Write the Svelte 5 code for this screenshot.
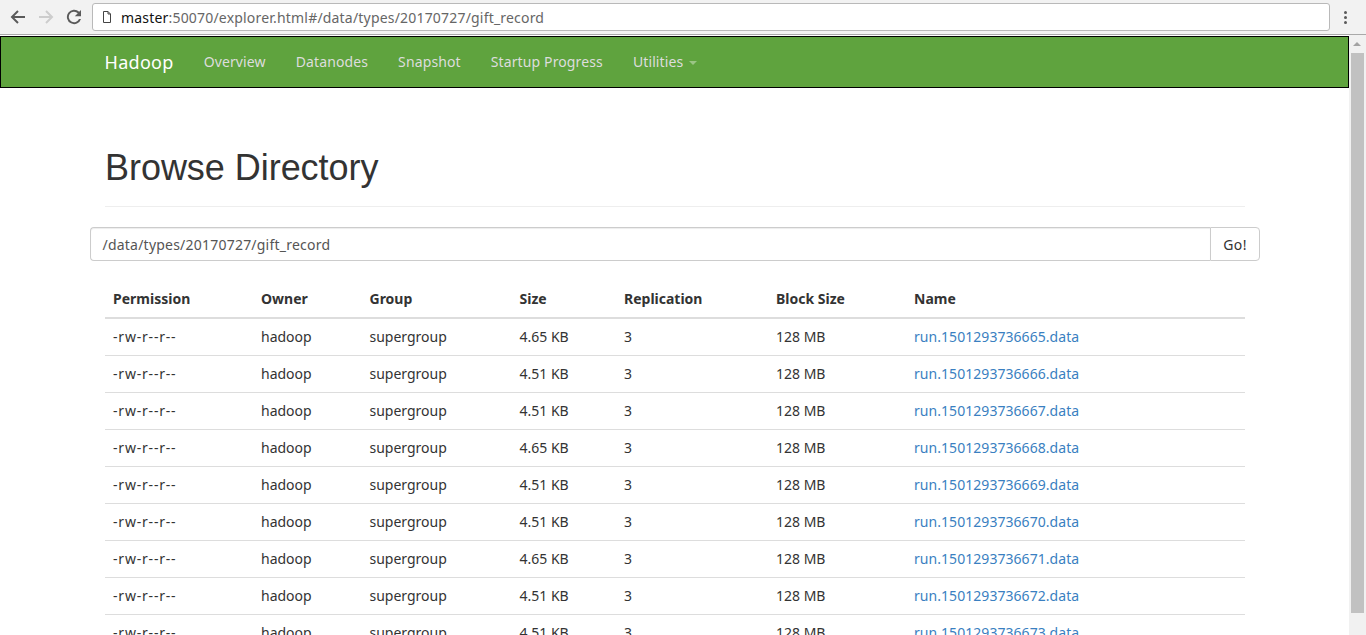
<script>
  const columns = ['Permission', 'Owner', 'Group', 'Size', 'Replication', 'Block Size', 'Name'];
  const sizes = ['4.65 KB', '4.51 KB', '4.51 KB', '4.65 KB', '4.51 KB', '4.51 KB', '4.65 KB', '4.51 KB', '4.51 KB'];
  const rows = sizes.map((size, i) => ({ size, name: `run.${1501293736665 + i}.data` }));
  const navItems = ['Overview', 'Datanodes', 'Snapshot', 'Startup Progress'];
</script>

<div class="window">
  <header class="toolbar">
    <svg class="icon back" viewBox="0 0 16 16" width="16" height="16"><path d="M15 7H4.400l4.300-4.300L7.300 1.300 0.600 8l6.700 6.700 1.400-1.400L4.400 9H15z" fill="#5a5a5a"/></svg>
    <svg class="icon forward" viewBox="0 0 16 16" width="16" height="16"><path d="M1 7h10.600L7.300 2.700l1.400-1.400L15.400 8l-6.700 6.700-1.400-1.400L11.600 9H1z" fill="#cdcdcd"/></svg>
    <svg class="icon reload" viewBox="0 0 16 16" width="16" height="16"><path d="M13.200 2.800A7.200 7.200 0 1 0 15 10h-2a5.300 5.300 0 1 1-1.200-5.800L8.800 7.200H15V1z" fill="#5a5a5a"/></svg>
    <div class="omnibox">
      <svg class="page" viewBox="0 0 8 12" width="8" height="12"><path d="M.5.500h4.500L7.500 3v8.500H.5zM5 .5V3h2.500" fill="none" stroke="#444" stroke-width="1"/></svg>
      <span class="host">master</span><span class="rest">:50070/explorer.html#/data/types/20170727/gift_record</span>
    </div>
    <div class="dots"><i></i><i></i><i></i></div>
  </header>

  <div class="viewport">
    <main class="page-area">
      <nav class="navbar">
        <a class="brand" href="#top">Hadoop</a>
        {#each navItems as item}
          <a class="nav-link" href="#top">{item}</a>
        {/each}
        <a class="nav-link" href="#top">Utilities <span class="caret"></span></a>
      </nav>

      <div class="container">
        <div class="page-header"><h1>Browse Directory</h1></div>

        <div class="input-group">
          <div class="path">/data/types/20170727/gift_record</div>
          <div class="go">Go!</div>
        </div>

        <table>
          <colgroup>
            <col class="c1" /><col class="c2" /><col class="c3" /><col class="c4" /><col class="c5" /><col class="c6" /><col />
          </colgroup>
          <thead>
            <tr>{#each columns as c}<th>{c}</th>{/each}</tr>
          </thead>
          <tbody>
            {#each rows as r}
              <tr>
                <td class="perm">-rw-r--r--</td>
                <td>hadoop</td>
                <td>supergroup</td>
                <td>{r.size}</td>
                <td>3</td>
                <td>128 MB</td>
                <td><a href="#top">{r.name}</a></td>
              </tr>
            {/each}
          </tbody>
        </table>
      </div>
    </main>

    <aside class="scrollbar">
      <div class="arrow"></div>
      <div class="thumb"></div>
    </aside>
  </div>
</div>

<style>
  :global(body) {
    margin: 0;
    background: #fff;
  }
  .window {
    width: 1366px;
    height: 635px;
    display: flex;
    flex-direction: column;
    overflow: hidden;
    font-family: "Noto Sans", "Open Sans", sans-serif;
    font-size: 14px;
    color: #333;
  }
  .toolbar {
    height: 35px;
    flex: none;
    box-sizing: border-box;
    background: #f2f2f2;
    border-bottom: 1px solid #a9a9a9;
    display: flex;
    align-items: center;
  }
  .icon { flex: none; }
  .back { margin-left: 10px; }
  .forward { margin-left: 12px; }
  .reload { margin-left: 12px; }
  .omnibox {
    margin-left: 10px;
    width: 1238px;
    height: 28px;
    box-sizing: border-box;
    border: 1px solid #b9b9b9;
    border-radius: 3px;
    background: #fff;
    display: flex;
    align-items: center;
    padding-left: 10px;
    font-size: 14px;
    letter-spacing: 0.19px;
    white-space: nowrap;
  }
  .page { margin-right: 10px; flex: none; }
  .host { color: #111; }
  .rest { color: #666; }
  .dots {
    margin-left: 14px;
    display: flex;
    flex-direction: column;
    gap: 2px;
  }
  .dots i {
    display: block;
    width: 3px;
    height: 3px;
    background: #5a5a5a;
    border-radius: 50%;
  }
  .viewport {
    flex: 1;
    display: flex;
    min-height: 0;
  }
  .page-area {
    flex: 1;
    min-width: 0;
    overflow: hidden;
  }
  .navbar {
    height: 52px;
    margin-top: 1px;
    box-sizing: border-box;
    background: #5fa33e;
    border: 1px solid #000;
    display: flex;
    align-items: center;
    padding-left: 88.5px;
  }
  .navbar a { text-decoration: none; white-space: nowrap; }
  .brand {
    color: #fff;
    font-size: 18px;
    letter-spacing: 0.3px;
    padding: 0 15px;
  }
  .nav-link {
    color: #ddd;
    padding: 0 15px 2px;
    font-size: 14px;
    letter-spacing: 0.12px;
  }
  .caret {
    display: inline-block;
    width: 0;
    height: 0;
    margin-left: 2px;
    vertical-align: middle;
    border-top: 4px solid #9bc585;
    border-left: 4px solid transparent;
    border-right: 4px solid transparent;
  }
  .container {
    width: 1170px;
    margin-left: 90px;
  }
  .page-header {
    margin: 40px 15px 20px;
    border-bottom: 1px solid #eee;
    height: 79px;
    box-sizing: border-box;
  }
  h1 {
    margin: 0;
    padding-top: 20px;
    font-family: "Liberation Sans", Arial, sans-serif;
    font-size: 36px;
    font-weight: 400;
    line-height: 40px;
    letter-spacing: -0.04px;
    color: #333;
  }
  .input-group {
    display: flex;
    height: 34px;
    margin-bottom: 20px;
  }
  .path {
    flex: 1;
    box-sizing: border-box;
    border: 1px solid #ccc;
    border-right: 0;
    border-radius: 4px 0 0 4px;
    padding: 1px 11.5px 0;
    line-height: 32px;
    color: #555;
    letter-spacing: 0.22px;
    box-shadow: inset 0 1px 1px rgba(0, 0, 0, 0.075);
  }
  .go {
    width: 50px;
    box-sizing: border-box;
    border: 1px solid #ccc;
    border-radius: 0 4px 4px 0;
    text-align: center;
    padding-top: 1px;
    line-height: 32px;
    letter-spacing: 0.4px;
    color: #333;
  }
  table {
    width: 1140px;
    margin-left: 15px;
    border-collapse: collapse;
    table-layout: fixed;
  }
  .c1 { width: 148px; }
  .c2 { width: 108.5px; }
  .c3 { width: 150px; }
  .c4 { width: 104.5px; }
  .c5 { width: 152px; }
  .c6 { width: 138px; }
  th, td {
    height: 37px;
    box-sizing: border-box;
    padding: 8px;
    line-height: 20px;
    text-align: left;
    white-space: nowrap;
    vertical-align: top;
  }
  th {
    font-weight: 700;
    border-bottom: 2px solid #ddd;
  }
  td { border-bottom: 1px solid #ddd; }
  .perm { letter-spacing: 0.8px; }
  td a {
    color: #3a7fc1;
    letter-spacing: 0.05px;
    text-decoration: none;
  }
  .scrollbar {
    flex: none;
    width: 17px;
    background: #f1f1f1;
    position: relative;
  }
  .arrow {
    position: absolute;
    top: 7px;
    left: 4px;
    width: 0;
    height: 0;
    border-left: 4px solid transparent;
    border-right: 4px solid transparent;
    border-bottom: 4px solid #a3a3a3;
  }
  .thumb {
    position: absolute;
    top: 18px;
    left: 2px;
    width: 13px;
    height: 560px;
    background: #c1c1c1;
  }
</style>
